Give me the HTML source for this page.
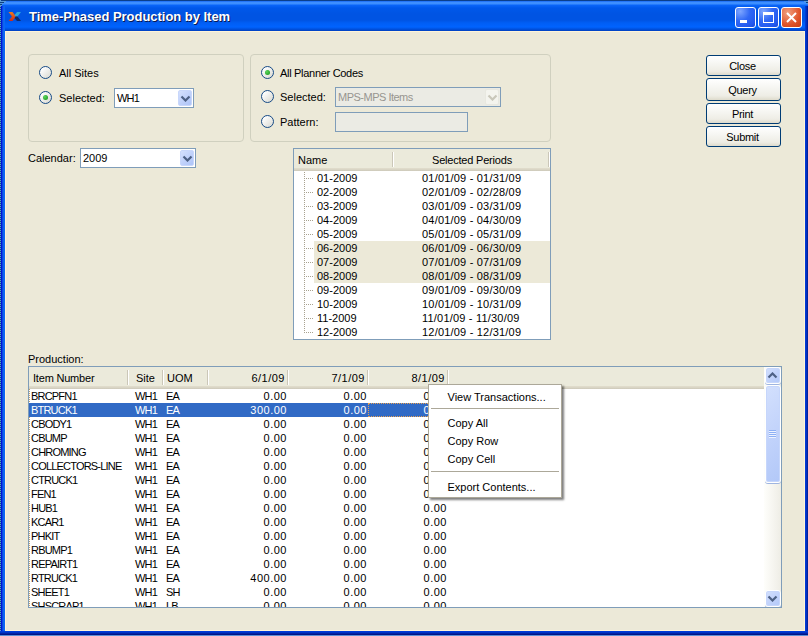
<!DOCTYPE html>
<html><head><meta charset="utf-8">
<style>
*{box-sizing:border-box;margin:0;padding:0}
html,body{width:808px;height:636px;overflow:hidden;background:#5a8fd6}
body{position:relative;font-family:"Liberation Sans",sans-serif;font-size:11px;color:#000}
.a{position:absolute}
.t{position:absolute;white-space:nowrap;line-height:14px;height:14px}
#win{left:0;top:0;width:808px;height:635px;background:#0054e3}
#title{left:0;top:0;width:808px;height:31px;
 background:linear-gradient(to bottom,#0a3f8c 0px,#0a3f8c 1px,#0d5ef2 1px,#3d8fff 2px,#3d8fff 4px,#0a66fa 5px,#0058ea 8px,#0054e3 14px,#0054e3 20px,#005ef5 23px,#0063ff 27px,#0052e0 29px,#0040c0 31px)}
#client{left:5px;top:31px;width:800px;height:600px;background:#ece9d8;border:1px solid #fff4d8}
#rb{left:805px;top:6px;width:3px;height:629px;background:linear-gradient(to right,#0040e0,#0030c0,#001a90)}
#bb{left:0;top:631px;width:808px;height:4px;background:linear-gradient(to bottom,#0040e0,#0036cc,#0020a0,#001078)}
#lb{left:0;top:6px;width:5px;height:629px;background:linear-gradient(to right,transparent 0,transparent 1px,#0014d8 1px,#0014d8 2px,#0848e2 2px,#0848e2 3px,#1062ee 3px,#1062ee 4px,#0a68f4 4px)}
#stripe{left:0;top:0;width:1px;height:635px;background:repeating-linear-gradient(to bottom,#5a9ad8 0,#5a9ad8 1px,#0a4a8a 1px,#0a4a8a 2px)}
.ttl{left:29px;top:9px;color:#fff;font-weight:bold;font-size:13px;line-height:16px;text-shadow:1px 1px 0 #0a1850;letter-spacing:-0.03px}
.tb{top:7px;width:21px;height:21px;border:1px solid #fff;border-radius:3px}
.grp{border:1px solid #d0d0bf;border-radius:4px}
.radio{width:13px;height:13px;border:1px solid #164a86;border-radius:50%;background:linear-gradient(135deg,#ffffff 15%,#dcdcd5 90%)}
.radio.on::after{content:"";position:absolute;left:3px;top:3px;width:5px;height:5px;border-radius:50%;background:radial-gradient(circle at 35% 35%,#5cd65c,#139018)}
.combo{background:#fff;border:1px solid #7f9db9}
.drop{position:absolute;right:1px;top:1px;width:14px;height:16px;border-radius:2px;background:linear-gradient(135deg,#d4e0fd,#aec4f8);border:1px solid #c8d7fb}
.drop svg{position:absolute;left:1px;top:4px}
.btn{border:1px solid #003c74;border-radius:3px;padding-right:2px;letter-spacing:-0.3px;background:linear-gradient(to bottom,#ffffff 0%,#f6f6f2 40%,#eeede5 80%,#dedbcc 100%);text-align:center;line-height:19px}
.hdr{background:linear-gradient(to bottom,#ebeadb 0,#ebeadb calc(100% - 3px),#e2decd calc(100% - 3px),#d6d2c2 calc(100% - 1px),#cbc7b8 100%)}
.sep{position:absolute;top:3px;width:2px;height:15px;border-left:1px solid #cbc7b8;border-right:1px solid #fff}
.sel{background:#316ac5;color:#fff}
.up{letter-spacing:-0.8px}
.n{letter-spacing:0.5px}
.d{letter-spacing:0.2px}
.sb{border:1px solid #fff;border-radius:3px;background:linear-gradient(135deg,#d3e0fd 0%,#c2d3fb 50%,#b2c8f8 100%);box-shadow:0 1px 0 #9fb5e0,inset 0 0 0 1px #c6d6fb}
.mi{position:absolute;left:18.5px;line-height:14px;white-space:nowrap}
</style></head><body>
<div id="win" class="a"></div>
<div id="title" class="a"></div>
<div id="lb" class="a"></div>
<div id="stripe" class="a"></div>
<div id="rb" class="a"></div>
<div id="bb" class="a"></div>
<div id="client" class="a"></div>
<div class="a" style="left:0;top:1px;width:6px;height:1px;background:#5a9ad8"></div>
<div class="a" style="left:0;top:2px;width:4px;height:1px;background:#0a3f80"></div>
<div class="a" style="left:0;top:3px;width:3px;height:1px;background:#5a9ad8"></div>
<div class="a" style="left:0;top:4px;width:2px;height:1px;background:#0a3f80"></div>
<div class="a" style="left:0;top:5px;width:2px;height:1px;background:#5a9ad8"></div>
<div class="a" style="left:804px;top:1px;width:4px;height:1px;background:#5a9ad8"></div>
<div class="a" style="left:806px;top:2px;width:2px;height:1px;background:#0a3f80"></div>
<div class="a" style="left:807px;top:3px;width:1px;height:1px;background:#5a9ad8"></div>


<!-- title icon -->
<svg class="a" style="left:0;top:0" width="24" height="24" viewBox="0 0 24 24">
 <defs><linearGradient id="og" x1="0" y1="0" x2="0" y2="1"><stop offset="0" stop-color="#f07a1c"/><stop offset="1" stop-color="#cc2a1a"/></linearGradient></defs>
 <path d="M8.5 12 L12.5 12 L16 16.5 L12.5 21 L8.5 21 L12 16.5 Z" fill="url(#og)"/>
 <path d="M14.5 15 L17 12 L21 12 L17.5 16.5 L15.5 16.5 Z" fill="#2aa6dc"/>
 <path d="M15.5 16.5 L17.5 16.5 L21 21 L17 21 L14.5 18 Z" fill="#0c2a6e"/>
</svg>
<div class="t ttl">Time-Phased Production by Item</div>

<!-- title buttons -->
<div class="a tb" style="left:735px;background:radial-gradient(circle at 22% 18%,#7ea6ff,#3068f5 45%,#2258ee 80%,#1a48d4)">
 <div class="a" style="left:4px;top:12px;width:7px;height:3px;background:#fff"></div>
</div>
<div class="a tb" style="left:758px;background:radial-gradient(circle at 22% 18%,#7ea6ff,#3068f5 45%,#2258ee 80%,#1a48d4)">
 <div class="a" style="left:4px;top:4px;width:11px;height:11px;border:1px solid #fff;border-top-width:3px"></div>
</div>
<div class="a tb" style="left:781px;background:radial-gradient(circle at 30% 25%,#f0a080,#e0542a 60%,#c83c10)">
 <svg class="a" style="left:4px;top:4px" width="11" height="11" viewBox="0 0 11 11"><path d="M1 1 L10 10 M10 1 L1 10" stroke="#fff" stroke-width="2"/></svg>
</div>

<!-- group 1 -->
<div class="a grp" style="left:28px;top:54px;width:216px;height:88px"></div>
<div class="a radio" style="left:39px;top:66px"></div>
<div class="t" style="left:59px;top:66px">All Sites</div>
<div class="a radio on" style="left:39px;top:91px"></div>
<div class="t" style="left:59px;top:91px">Selected:</div>
<div class="a combo" style="left:114px;top:88px;width:80px;height:20px">
 <div class="t up" style="left:2px;top:2px">WH1</div>
 <div class="drop"><svg width="11" height="7" viewBox="0 0 11 7"><path d="M1.5 1.5 L5.5 5.5 L9.5 1.5" stroke="#4d6185" stroke-width="2.2" fill="none"/></svg></div>
</div>

<!-- group 2 -->
<div class="a grp" style="left:250px;top:54px;width:301px;height:88px"></div>
<div class="a radio on" style="left:261px;top:66px"></div>
<div class="t" style="left:280px;top:66px;letter-spacing:-0.3px">All Planner Codes</div>
<div class="a radio" style="left:261px;top:90px"></div>
<div class="t" style="left:280px;top:90px">Selected:</div>
<div class="a combo" style="left:335px;top:87px;width:166px;height:20px;background:#ebebe4;border-color:#7f9db9">
 <div class="t" style="left:2px;top:2px;color:#979590;letter-spacing:-0.5px">MPS-MPS Items</div>
 <div class="drop" style="background:#f4f4ee;border-color:#e8e8e0"><svg width="11" height="7" viewBox="0 0 11 7"><path d="M1.5 1.5 L5.5 5.5 L9.5 1.5" stroke="#c9c7ba" stroke-width="2.2" fill="none"/></svg></div>
</div>
<div class="a radio" style="left:261px;top:115px"></div>
<div class="t" style="left:280px;top:115px">Pattern:</div>
<div class="a combo" style="left:335px;top:112px;width:133px;height:20px;background:#ebebe4"></div>

<!-- calendar -->
<div class="t" style="left:28px;top:151px">Calendar:</div>
<div class="a combo" style="left:80px;top:148px;width:116px;height:20px">
 <div class="t" style="left:2px;top:2px">2009</div>
 <div class="drop"><svg width="11" height="7" viewBox="0 0 11 7"><path d="M1.5 1.5 L5.5 5.5 L9.5 1.5" stroke="#4d6185" stroke-width="2.2" fill="none"/></svg></div>
</div>

<!-- buttons -->
<div class="a btn" style="left:706px;top:55px;width:75px;height:21px;line-height:21px">Close</div>
<div class="a btn" style="left:706px;top:78px;width:75px;height:23px;line-height:23px">Query</div>
<div class="a btn" style="left:706px;top:103px;width:75px;height:21px;line-height:21px">Print</div>
<div class="a btn" style="left:706px;top:126px;width:75px;height:21px;line-height:21px">Submit</div>

<!-- TREE -->
<div id="tree" class="a" style="left:293px;top:148px;width:258px;height:192px;border:1px solid #7f9db9;background:#fff;overflow:hidden">
 <div class="a hdr" style="left:0;top:0;width:256px;height:22px">
  <div class="t" style="left:4px;top:4px">Name</div>
  <div class="sep" style="left:98px"></div>
  <div class="t" style="left:138px;top:4px;letter-spacing:-0.2px">Selected Periods</div>
  <div class="sep" style="left:254px"></div>
 </div>
 <div id="treerows"><div class="t" style="left:23px;top:22px">01-2009</div><div class="t d" style="left:128px;top:22px">01/01/09 - 01/31/09</div><div class="a" style="left:12px;top:29px;width:8px;height:1px;background:repeating-linear-gradient(to right,#a8a290 0,#a8a290 1px,transparent 1px,transparent 2px)"></div><div class="t" style="left:23px;top:36px">02-2009</div><div class="t d" style="left:128px;top:36px">02/01/09 - 02/28/09</div><div class="a" style="left:12px;top:43px;width:8px;height:1px;background:repeating-linear-gradient(to right,#a8a290 0,#a8a290 1px,transparent 1px,transparent 2px)"></div><div class="t" style="left:23px;top:50px">03-2009</div><div class="t d" style="left:128px;top:50px">03/01/09 - 03/31/09</div><div class="a" style="left:12px;top:57px;width:8px;height:1px;background:repeating-linear-gradient(to right,#a8a290 0,#a8a290 1px,transparent 1px,transparent 2px)"></div><div class="t" style="left:23px;top:64px">04-2009</div><div class="t d" style="left:128px;top:64px">04/01/09 - 04/30/09</div><div class="a" style="left:12px;top:71px;width:8px;height:1px;background:repeating-linear-gradient(to right,#a8a290 0,#a8a290 1px,transparent 1px,transparent 2px)"></div><div class="t" style="left:23px;top:78px">05-2009</div><div class="t d" style="left:128px;top:78px">05/01/09 - 05/31/09</div><div class="a" style="left:12px;top:85px;width:8px;height:1px;background:repeating-linear-gradient(to right,#a8a290 0,#a8a290 1px,transparent 1px,transparent 2px)"></div><div class="a" style="left:20px;top:92px;width:236px;height:14px;background:#ece9d8"></div><div class="t" style="left:23px;top:92px">06-2009</div><div class="t d" style="left:128px;top:92px">06/01/09 - 06/30/09</div><div class="a" style="left:12px;top:99px;width:8px;height:1px;background:repeating-linear-gradient(to right,#a8a290 0,#a8a290 1px,transparent 1px,transparent 2px)"></div><div class="a" style="left:20px;top:106px;width:236px;height:14px;background:#ece9d8"></div><div class="t" style="left:23px;top:106px">07-2009</div><div class="t d" style="left:128px;top:106px">07/01/09 - 07/31/09</div><div class="a" style="left:12px;top:113px;width:8px;height:1px;background:repeating-linear-gradient(to right,#a8a290 0,#a8a290 1px,transparent 1px,transparent 2px)"></div><div class="a" style="left:20px;top:120px;width:236px;height:14px;background:#ece9d8"></div><div class="t" style="left:23px;top:120px">08-2009</div><div class="t d" style="left:128px;top:120px">08/01/09 - 08/31/09</div><div class="a" style="left:12px;top:127px;width:8px;height:1px;background:repeating-linear-gradient(to right,#a8a290 0,#a8a290 1px,transparent 1px,transparent 2px)"></div><div class="t" style="left:23px;top:134px">09-2009</div><div class="t d" style="left:128px;top:134px">09/01/09 - 09/30/09</div><div class="a" style="left:12px;top:141px;width:8px;height:1px;background:repeating-linear-gradient(to right,#a8a290 0,#a8a290 1px,transparent 1px,transparent 2px)"></div><div class="t" style="left:23px;top:148px">10-2009</div><div class="t d" style="left:128px;top:148px">10/01/09 - 10/31/09</div><div class="a" style="left:12px;top:155px;width:8px;height:1px;background:repeating-linear-gradient(to right,#a8a290 0,#a8a290 1px,transparent 1px,transparent 2px)"></div><div class="t" style="left:23px;top:162px">11-2009</div><div class="t d" style="left:128px;top:162px">11/01/09 - 11/30/09</div><div class="a" style="left:12px;top:169px;width:8px;height:1px;background:repeating-linear-gradient(to right,#a8a290 0,#a8a290 1px,transparent 1px,transparent 2px)"></div><div class="t" style="left:23px;top:176px">12-2009</div><div class="t d" style="left:128px;top:176px">12/01/09 - 12/31/09</div><div class="a" style="left:12px;top:183px;width:8px;height:1px;background:repeating-linear-gradient(to right,#a8a290 0,#a8a290 1px,transparent 1px,transparent 2px)"></div><div class="a" style="left:10px;top:23px;width:1px;height:161px;background:repeating-linear-gradient(to bottom,#a8a290 0,#a8a290 1px,transparent 1px,transparent 2px)"></div></div><!--/treerows-->
</div>

<!-- production -->
<div class="t" style="left:28px;top:352px">Production:</div>
<div id="tbl" class="a" style="left:28px;top:366px;width:754px;height:242px;border:1px solid #7f9db9;background:#fff;overflow:hidden">
 <div class="a hdr" style="left:0;top:0;width:735px;height:22px">
  <div class="t" style="left:4px;top:4px;letter-spacing:-0.2px">Item Number</div>
  <div class="sep" style="left:98px"></div>
  <div class="t" style="left:107px;top:4px">Site</div>
  <div class="sep" style="left:133px"></div>
  <div class="t" style="left:138px;top:4px">UOM</div>
  <div class="sep" style="left:178px"></div>
  <div class="t" style="left:180px;top:4px;width:76px;text-align:right;letter-spacing:0.5px">6/1/09</div>
  <div class="sep" style="left:258px"></div>
  <div class="t" style="left:260px;top:4px;width:76px;text-align:right;letter-spacing:0.5px">7/1/09</div>
  <div class="sep" style="left:338px"></div>
  <div class="t" style="left:340px;top:4px;width:76px;text-align:right;letter-spacing:0.5px">8/1/09</div>
  <div class="sep" style="left:418px"></div>
 </div>
 <div id="rows"><div class="a" style="left:0;top:22px;width:1px;height:218px;background:repeating-linear-gradient(to bottom,#c0a070 0,#c0a070 1px,transparent 1px,transparent 2px)"></div><div class="t up" style="left:2px;top:22px;">BRCPFN1</div><div class="t up" style="left:106px;top:22px;">WH1</div><div class="t up" style="left:137px;top:22px;">EA</div><div class="t n" style="left:178px;top:22px;width:80px;text-align:right;">0.00</div><div class="t n" style="left:258px;top:22px;width:80px;text-align:right;">0.00</div><div class="t n" style="left:338px;top:22px;width:80px;text-align:right;">0.00</div><div class="a sel" style="left:0;top:36px;width:419px;height:14px"></div><div class="a" style="left:339px;top:36px;width:80px;height:14px;border:1px dotted #e8a050"></div><div class="t up" style="left:2px;top:36px;color:#fff;">BTRUCK1</div><div class="t up" style="left:106px;top:36px;color:#fff;">WH1</div><div class="t up" style="left:137px;top:36px;color:#fff;">EA</div><div class="t n" style="left:178px;top:36px;width:80px;text-align:right;color:#fff;">300.00</div><div class="t n" style="left:258px;top:36px;width:80px;text-align:right;color:#fff;">0.00</div><div class="t n" style="left:338px;top:36px;width:80px;text-align:right;color:#fff;">0.00</div><div class="t up" style="left:2px;top:50px;">CBODY1</div><div class="t up" style="left:106px;top:50px;">WH1</div><div class="t up" style="left:137px;top:50px;">EA</div><div class="t n" style="left:178px;top:50px;width:80px;text-align:right;">0.00</div><div class="t n" style="left:258px;top:50px;width:80px;text-align:right;">0.00</div><div class="t n" style="left:338px;top:50px;width:80px;text-align:right;">0.00</div><div class="t up" style="left:2px;top:64px;">CBUMP</div><div class="t up" style="left:106px;top:64px;">WH1</div><div class="t up" style="left:137px;top:64px;">EA</div><div class="t n" style="left:178px;top:64px;width:80px;text-align:right;">0.00</div><div class="t n" style="left:258px;top:64px;width:80px;text-align:right;">0.00</div><div class="t n" style="left:338px;top:64px;width:80px;text-align:right;">0.00</div><div class="t up" style="left:2px;top:78px;">CHROMING</div><div class="t up" style="left:106px;top:78px;">WH1</div><div class="t up" style="left:137px;top:78px;">EA</div><div class="t n" style="left:178px;top:78px;width:80px;text-align:right;">0.00</div><div class="t n" style="left:258px;top:78px;width:80px;text-align:right;">0.00</div><div class="t n" style="left:338px;top:78px;width:80px;text-align:right;">0.00</div><div class="t up" style="left:2px;top:92px;">COLLECTORS-LINE</div><div class="t up" style="left:106px;top:92px;">WH1</div><div class="t up" style="left:137px;top:92px;">EA</div><div class="t n" style="left:178px;top:92px;width:80px;text-align:right;">0.00</div><div class="t n" style="left:258px;top:92px;width:80px;text-align:right;">0.00</div><div class="t n" style="left:338px;top:92px;width:80px;text-align:right;">0.00</div><div class="t up" style="left:2px;top:106px;">CTRUCK1</div><div class="t up" style="left:106px;top:106px;">WH1</div><div class="t up" style="left:137px;top:106px;">EA</div><div class="t n" style="left:178px;top:106px;width:80px;text-align:right;">0.00</div><div class="t n" style="left:258px;top:106px;width:80px;text-align:right;">0.00</div><div class="t n" style="left:338px;top:106px;width:80px;text-align:right;">0.00</div><div class="t up" style="left:2px;top:120px;">FEN1</div><div class="t up" style="left:106px;top:120px;">WH1</div><div class="t up" style="left:137px;top:120px;">EA</div><div class="t n" style="left:178px;top:120px;width:80px;text-align:right;">0.00</div><div class="t n" style="left:258px;top:120px;width:80px;text-align:right;">0.00</div><div class="t n" style="left:338px;top:120px;width:80px;text-align:right;">0.00</div><div class="t up" style="left:2px;top:134px;">HUB1</div><div class="t up" style="left:106px;top:134px;">WH1</div><div class="t up" style="left:137px;top:134px;">EA</div><div class="t n" style="left:178px;top:134px;width:80px;text-align:right;">0.00</div><div class="t n" style="left:258px;top:134px;width:80px;text-align:right;">0.00</div><div class="t n" style="left:338px;top:134px;width:80px;text-align:right;">0.00</div><div class="t up" style="left:2px;top:148px;">KCAR1</div><div class="t up" style="left:106px;top:148px;">WH1</div><div class="t up" style="left:137px;top:148px;">EA</div><div class="t n" style="left:178px;top:148px;width:80px;text-align:right;">0.00</div><div class="t n" style="left:258px;top:148px;width:80px;text-align:right;">0.00</div><div class="t n" style="left:338px;top:148px;width:80px;text-align:right;">0.00</div><div class="t up" style="left:2px;top:162px;">PHKIT</div><div class="t up" style="left:106px;top:162px;">WH1</div><div class="t up" style="left:137px;top:162px;">EA</div><div class="t n" style="left:178px;top:162px;width:80px;text-align:right;">0.00</div><div class="t n" style="left:258px;top:162px;width:80px;text-align:right;">0.00</div><div class="t n" style="left:338px;top:162px;width:80px;text-align:right;">0.00</div><div class="t up" style="left:2px;top:176px;">RBUMP1</div><div class="t up" style="left:106px;top:176px;">WH1</div><div class="t up" style="left:137px;top:176px;">EA</div><div class="t n" style="left:178px;top:176px;width:80px;text-align:right;">0.00</div><div class="t n" style="left:258px;top:176px;width:80px;text-align:right;">0.00</div><div class="t n" style="left:338px;top:176px;width:80px;text-align:right;">0.00</div><div class="t up" style="left:2px;top:190px;">REPAIRT1</div><div class="t up" style="left:106px;top:190px;">WH1</div><div class="t up" style="left:137px;top:190px;">EA</div><div class="t n" style="left:178px;top:190px;width:80px;text-align:right;">0.00</div><div class="t n" style="left:258px;top:190px;width:80px;text-align:right;">0.00</div><div class="t n" style="left:338px;top:190px;width:80px;text-align:right;">0.00</div><div class="t up" style="left:2px;top:204px;">RTRUCK1</div><div class="t up" style="left:106px;top:204px;">WH1</div><div class="t up" style="left:137px;top:204px;">EA</div><div class="t n" style="left:178px;top:204px;width:80px;text-align:right;">400.00</div><div class="t n" style="left:258px;top:204px;width:80px;text-align:right;">0.00</div><div class="t n" style="left:338px;top:204px;width:80px;text-align:right;">0.00</div><div class="t up" style="left:2px;top:218px;">SHEET1</div><div class="t up" style="left:106px;top:218px;">WH1</div><div class="t up" style="left:137px;top:218px;">SH</div><div class="t n" style="left:178px;top:218px;width:80px;text-align:right;">0.00</div><div class="t n" style="left:258px;top:218px;width:80px;text-align:right;">0.00</div><div class="t n" style="left:338px;top:218px;width:80px;text-align:right;">0.00</div><div class="t up" style="left:2px;top:232px;">SHSCRAP1</div><div class="t up" style="left:106px;top:232px;">WH1</div><div class="t up" style="left:137px;top:232px;">LB</div><div class="t n" style="left:178px;top:232px;width:80px;text-align:right;">0.00</div><div class="t n" style="left:258px;top:232px;width:80px;text-align:right;">0.00</div><div class="t n" style="left:338px;top:232px;width:80px;text-align:right;">0.00</div></div><!--/rows-->
 <!-- scrollbar -->
 <div class="a" style="left:735px;top:0;width:17px;height:240px;background:linear-gradient(to right,#fefefb,#f3f2ec 70%,#eeede5)"></div>
 <div class="a sb" style="left:736px;top:0;width:16px;height:17px"><svg class="a" style="left:1px;top:4px" width="12" height="7" viewBox="0 0 12 7"><path d="M1.5 5.5 L5.5 1.5 L9.5 5.5" stroke="#4d6185" stroke-width="2.2" fill="none"/></svg></div>
 <div class="a sb" style="left:736px;top:18px;width:16px;height:98px"><div class="a" style="left:3px;top:44px;width:7px;height:8px;background:repeating-linear-gradient(to bottom,#8eb0f4 0,#8eb0f4 1px,#eef3ff 1px,#eef3ff 2px)"></div></div>
 <div class="a sb" style="left:736px;top:223px;width:16px;height:17px"><svg class="a" style="left:1px;top:4px" width="12" height="7" viewBox="0 0 12 7"><path d="M1.5 1.5 L5.5 5.5 L9.5 1.5" stroke="#4d6185" stroke-width="2.2" fill="none"/></svg></div>
</div>

<!-- context menu -->

<div id="menu" class="a" style="left:428px;top:384px;width:134px;height:114px;background:#fff;border:1px solid #aca899;box-shadow:2px 2px 2px rgba(0,0,0,0.5)">
 <div class="mi" style="top:5px">View Transactions...</div>
 <div class="a" style="left:2px;top:23px;width:128px;height:1px;background:#aca899"></div>
 <div class="mi" style="top:31px">Copy All</div>
 <div class="mi" style="top:49px">Copy Row</div>
 <div class="mi" style="top:67px">Copy Cell</div>
 <div class="a" style="left:2px;top:86px;width:128px;height:1px;background:#aca899"></div>
 <div class="mi" style="top:95px">Export Contents...</div>
</div>
</body></html>
